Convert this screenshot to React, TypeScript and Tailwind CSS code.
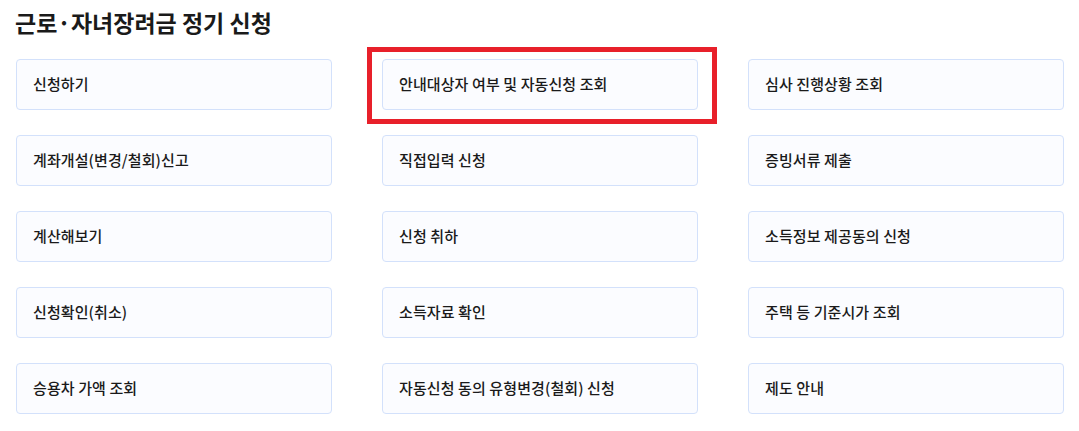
import React from "react";

const items = [
  "신청하기",
  "안내대상자 여부 및 자동신청 조회",
  "심사 진행상황 조회",
  "계좌개설(변경/철회)신고",
  "직접입력 신청",
  "증빙서류 제출",
  "계산해보기",
  "신청 취하",
  "소득정보 제공동의 신청",
  "신청확인(취소)",
  "소득자료 확인",
  "주택 등 기준시가 조회",
  "승용차 가액 조회",
  "자동신청 동의 유형변경(철회) 신청",
  "제도 안내",
];

export default function App() {
  return (
    <div
      className="relative w-[1079px] h-[431px] bg-white overflow-hidden pl-[16px] pr-[15px]"
      style={{ fontFamily: '"Noto Sans CJK KR", "Noto Sans", sans-serif' }}
    >
      <h1 className="pt-[5px] h-[59px] text-[23px] font-bold text-[#1a1a1a] leading-[34px] -ml-[1px]">
        근로·자녀장려금 정기 신청
      </h1>
      <div className="grid grid-cols-3 gap-x-[50px] gap-y-[25px]">
        {items.map((t) => (
          <div
            key={t}
            className="h-[51px] flex items-center pl-[16px] rounded-[4px] border border-[#d3e1fb] bg-[#fbfcff] text-[15px] font-medium text-[#1a1a1a] tracking-[0.1px]"
          >
            {t}
          </div>
        ))}
      </div>
      <div className="absolute left-[367px] top-[47px] w-[350px] h-[77px] border-[5px] border-[#e8202a]" />
    </div>
  );
}
